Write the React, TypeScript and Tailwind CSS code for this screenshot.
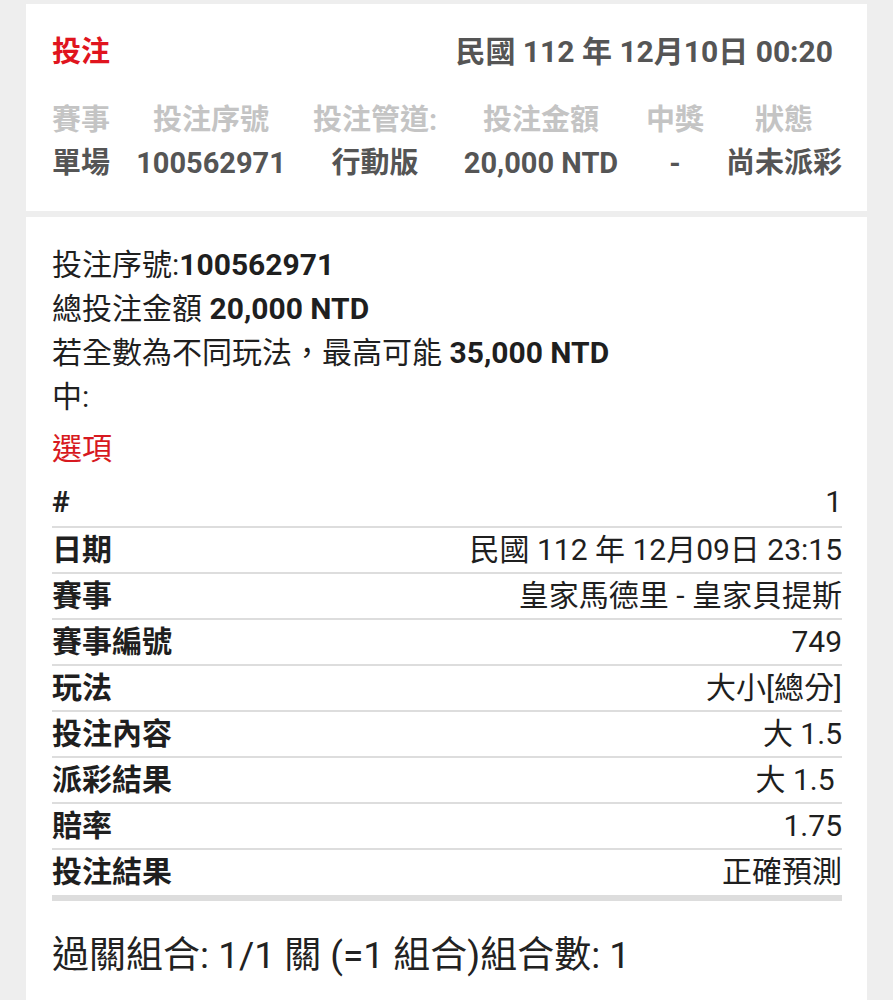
const font = "font-['Roboto','Noto_Sans_CJK_TC',sans-serif]";

const summaryHead = ["賽事", "投注序號", "投注管道:", "投注金額", "中獎", "狀態"];
const summaryVals = ["單場", "100562971", "行動版", "20,000 NTD", "-", "尚未派彩"];

const rows: [string, string][] = [
  ["日期", "民國 112 年 12月09日 23:15"],
  ["賽事", "皇家馬德里 - 皇家貝提斯"],
  ["賽事編號", "749"],
  ["玩法", "大小[總分]"],
  ["投注內容", "大 1.5"],
  ["派彩結果", "大 1.5\u00a0"],
  ["賠率", "1.75"],
  ["投注結果", "正確預測"],
];

export default function App() {
  return (
    <div className={`${font} min-h-[1000px] bg-[#eeeeee] px-[26px] pt-[4px]`}>
      {/* summary card */}
      <div className="bg-white pl-[26px] pr-[25px] pt-[28px] pb-[26px]">
        <div className="flex items-center justify-between leading-[40px]">
          <span className="text-[29px] font-bold text-[#e0141e]">投注</span>
          <span className="pr-[9px] text-[30px] font-bold text-[#555555]">
            民國 112 年 12月10日 00:20
          </span>
        </div>
        <div className="mt-[27px] grid grid-cols-[58px_202px_126px_206px_62px_156px] text-center text-[29px] font-bold leading-[43px]">
          {summaryHead.map((h) => (
            <span key={h} className="whitespace-nowrap text-[#c4c4c4]">
              {h}
            </span>
          ))}
          {summaryVals.map((v) => (
            <span key={v} className="whitespace-nowrap text-[#555555]">
              {v}
            </span>
          ))}
        </div>
      </div>

      {/* details card */}
      <div className="mt-[6px] bg-white pl-[26px] pr-[25px] pt-[26px] pb-[30px] text-[#1f1f1f]">
        <div className="text-[30px] leading-[44px]">
          <div>
            投注序號:<span className="font-bold">100562971</span>
          </div>
          <div>
            總投注金額 <span className="font-bold">20,000 NTD</span>
          </div>
          <div>
            若全數為不同玩法，最高可能 <span className="font-bold">35,000 NTD</span>
          </div>
          <div>中:</div>
          <div className="mt-[8px] text-[#d71920]">選項</div>
        </div>

        <div className="mt-[9px] text-[30px] leading-[44px]">
          <div className="flex justify-between border-b-2 border-[#dddddd] pb-[2px]">
            <span className="font-bold">#</span>
            <span>1</span>
          </div>
          {rows.map(([k, v], i) => (
            <div
              key={k + i}
              className={`flex justify-between ${
                i === rows.length - 1 ? "border-b-[6px] pb-[1px]" : "border-b-2 pb-[0px]"
              } border-[#dddddd]`}
            >
              <span className="font-bold">{k}</span>
              <span className="whitespace-pre">{v}</span>
            </div>
          ))}
        </div>

        <div className="mt-[30px] text-[37px] leading-[50px] text-[#222222]">
          過關組合: 1/1 關 (=1 組合)組合數: 1
        </div>
      </div>
    </div>
  );
}
